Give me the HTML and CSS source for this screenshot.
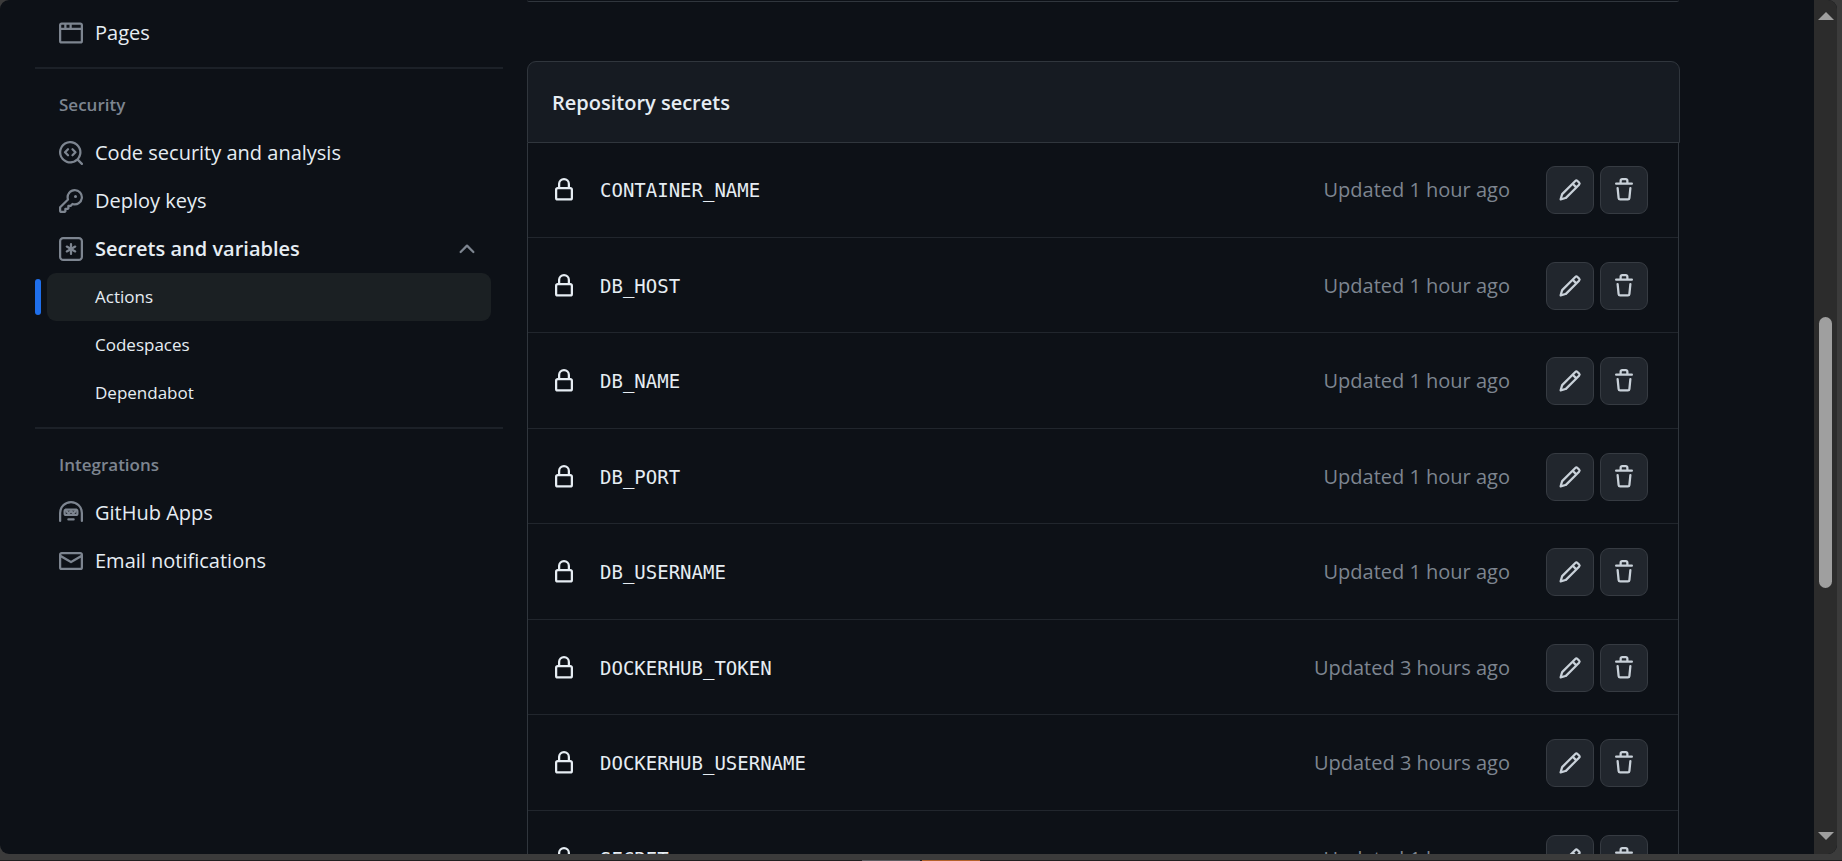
FILE: index.html
```html
<!DOCTYPE html>
<html lang="en">
<head>
<meta charset="utf-8">
<title>Actions secrets</title>
<link rel="stylesheet" href="styles.css">
</head>
<body>
<svg class="sprite" aria-hidden="true">
  <symbol id="browser" viewBox="0 0 16 16"><path d="M0 2.75C0 1.784.784 1 1.75 1h12.5c.966 0 1.75.784 1.75 1.75v10.5A1.75 1.75 0 0 1 14.25 15H1.75A1.75 1.75 0 0 1 0 13.25ZM14.5 6h-13v7.25c0 .138.112.25.25.25h12.5a.25.25 0 0 0 .25-.25Zm-6-3.5v2h6V2.75a.25.25 0 0 0-.25-.25ZM5 2.5v2h2v-2Zm-3.25 0a.25.25 0 0 0-.25.25V4.5h2v-2Z"/></symbol>
  <symbol id="codescan" viewBox="0 0 16 16"><path d="M8.47 4.97a.75.75 0 0 0 0 1.06L9.94 7.5 8.47 8.97a.75.75 0 1 0 1.06 1.06l2-2a.75.75 0 0 0 0-1.06l-2-2a.75.75 0 0 0-1.06 0ZM6.53 6.03a.75.75 0 0 0-1.06-1.06l-2 2a.75.75 0 0 0 0 1.06l2 2a.75.75 0 1 0 1.06-1.06L5.06 7.5l1.47-1.47Z"/><path d="M12.246 13.307a7.501 7.501 0 1 1 1.06-1.06l2.474 2.473a.749.749 0 0 1-.326 1.275.749.749 0 0 1-.734-.215ZM1.5 7.5a6.002 6.002 0 0 0 3.608 5.504 6.002 6.002 0 0 0 6.486-1.117.748.748 0 0 1 .292-.293A6 6 0 1 0 1.5 7.5Z"/></symbol>
  <symbol id="key" viewBox="0 0 16 16"><path d="M10.5 0a5.499 5.499 0 1 1-1.288 10.848l-.932.932a.749.749 0 0 1-.53.22H7v.75a.749.749 0 0 1-.22.53l-.5.5a.749.749 0 0 1-.53.22H5v.75a.749.749 0 0 1-.22.53l-.5.5a.749.749 0 0 1-.53.22h-2A1.75 1.75 0 0 1 0 14.25v-2c0-.199.079-.389.22-.53l4.932-4.932A5.5 5.5 0 0 1 10.5 0Zm-4 5.5c-.001.431.069.86.205 1.269a.75.75 0 0 1-.181.768L1.5 12.56v1.69c0 .138.112.25.25.25h1.69l.06-.06v-1.19a.75.75 0 0 1 .75-.75h1.19l.06-.06v-1.19a.75.75 0 0 1 .75-.75h1.19l1.023-1.025a.75.75 0 0 1 .768-.18A4 4 0 1 0 6.5 5.5ZM11 6a1 1 0 1 1 0-2 1 1 0 0 1 0 2Z"/></symbol>
  <symbol id="asterisk" viewBox="0 0 16 16"><path d="M0 2.75A2.75 2.75 0 0 1 2.75 0h10.5A2.75 2.75 0 0 1 16 2.75v10.5A2.75 2.75 0 0 1 13.25 16H2.75A2.75 2.75 0 0 1 0 13.25ZM2.75 1.5c-.69 0-1.25.56-1.25 1.25v10.5c0 .69.56 1.25 1.25 1.25h10.5c.69 0 1.25-.56 1.25-1.25V2.75c0-.69-.56-1.25-1.25-1.25Z"/><path d="M8 4a.75.75 0 0 1 .75.75V6.7l1.69-.975a.75.75 0 0 1 .75 1.3L9.5 8l1.69.976a.75.75 0 0 1-.75 1.298L8.75 9.3v1.951a.75.75 0 0 1-1.5 0V9.299l-1.69.976a.75.75 0 0 1-.75-1.3L6.5 8l-1.69-.975a.75.75 0 0 1 .75-1.3l1.69.976V4.75A.75.75 0 0 1 8 4Z"/></symbol>
  <symbol id="chevron" viewBox="0 0 16 16"><path d="M3.22 10.53a.749.749 0 0 1 0-1.06l4.25-4.25a.749.749 0 0 1 1.06 0l4.25 4.25a.749.749 0 1 1-1.06 1.06L8 6.811 4.28 10.53a.749.749 0 0 1-1.06 0Z"/></symbol>
  <symbol id="hubot" viewBox="0 0 16 16"><path d="M0 8a8 8 0 1 1 16 0v5.25a.75.75 0 0 1-1.5 0V8a6.5 6.5 0 1 0-13 0v5.25a.75.75 0 0 1-1.5 0V8Zm5.5 4.25a.75.75 0 0 1 .75-.75h3.5a.75.75 0 0 1 0 1.5h-3.5a.75.75 0 0 1-.75-.75Z"/><path fill-rule="evenodd" d="M3 6.75C3 5.784 3.784 5 4.75 5h6.5c.966 0 1.75.784 1.75 1.75v1.5A1.75 1.75 0 0 1 11.25 10h-6.5A1.75 1.75 0 0 1 3 8.25ZM4.75 6.5a.25.25 0 0 0-.25.25v1.5c0 .138.112.25.25.25h6.5a.25.25 0 0 0 .25-.25v-1.5a.25.25 0 0 0-.25-.25Z"/><path d="M4.47 6.22a.75.75 0 0 1 1.06 0l.97.97.97-.97a.75.75 0 0 1 1.06 0l.97.97.97-.97a.749.749 0 0 1 1.275.326.749.749 0 0 1-.215.734l-1.5 1.5a.75.75 0 0 1-1.06 0L8 7.81l-.97.97a.75.75 0 0 1-1.06 0l-1.5-1.5a.75.75 0 0 1 0-1.06Z"/></symbol>
  <symbol id="mail" viewBox="0 0 16 16"><path d="M1.75 2h12.5c.966 0 1.75.784 1.75 1.75v8.5A1.75 1.75 0 0 1 14.25 14H1.75A1.75 1.75 0 0 1 0 12.25v-8.5C0 2.784.784 2 1.75 2ZM1.5 12.251c0 .138.112.25.25.25h12.5a.25.25 0 0 0 .25-.25V5.809L8.38 9.397a.75.75 0 0 1-.76 0L1.5 5.809v6.442Zm13-8.181v-.32a.25.25 0 0 0-.25-.25H1.75a.25.25 0 0 0-.25.25v.32L8 7.88Z"/></symbol>
  <symbol id="lock" viewBox="0 0 16 16"><path d="M4 4a4 4 0 0 1 8 0v2h.25c.966 0 1.75.784 1.75 1.75v5.5A1.75 1.75 0 0 1 12.25 15h-8.5A1.75 1.75 0 0 1 2 13.25v-5.5C2 6.784 2.784 6 3.75 6H4Zm8.25 3.5h-8.5a.25.25 0 0 0-.25.25v5.5c0 .138.112.25.25.25h8.5a.25.25 0 0 0 .25-.25v-5.5a.25.25 0 0 0-.25-.25ZM10.5 6V4a2.5 2.5 0 1 0-5 0v2Z"/></symbol>
  <symbol id="pencil" viewBox="0 0 16 16"><path d="M11.013 1.427a1.75 1.75 0 0 1 2.474 0l1.086 1.086a1.75 1.75 0 0 1 0 2.474l-8.61 8.61c-.21.21-.47.364-.756.445l-3.251.93a.75.75 0 0 1-.927-.928l.929-3.25c.081-.286.235-.547.445-.758l8.61-8.61Zm.176 4.823L9.75 4.81l-6.286 6.287a.253.253 0 0 0-.064.108l-.558 1.953 1.953-.558a.253.253 0 0 0 .108-.064Zm1.238-3.763a.25.25 0 0 0-.354 0L10.811 3.75l1.439 1.44 1.263-1.263a.25.25 0 0 0 0-.354Z"/></symbol>
  <symbol id="trash" viewBox="0 0 16 16"><path d="M11 1.75V3h2.25a.75.75 0 0 1 0 1.5H2.75a.75.75 0 0 1 0-1.5H5V1.75C5 .784 5.784 0 6.75 0h2.5C10.216 0 11 .784 11 1.75ZM4.496 6.675l.66 6.6a.25.25 0 0 0 .249.225h5.19a.25.25 0 0 0 .249-.225l.66-6.6a.75.75 0 0 1 1.492.149l-.66 6.6A1.748 1.748 0 0 1 10.595 15h-5.19a1.75 1.75 0 0 1-1.741-1.575l-.66-6.6a.75.75 0 1 1 1.492-.15ZM6.5 1.75V3h3V1.75a.25.25 0 0 0-.25-.25h-2.5a.25.25 0 0 0-.25.25Z"/></symbol>
</svg>

<div class="window">
  <div class="content">
    <nav class="sidebar" aria-label="Repository settings">
      <ul class="nav-list">
        <li><a class="nav-item" href="#"><svg class="icon"><use href="#browser"/></svg>Pages</a></li>
      </ul>
      <h3 class="nav-title">Security</h3>
      <ul class="nav-list">
        <li><a class="nav-item" href="#"><svg class="icon"><use href="#codescan"/></svg>Code security and analysis</a></li>
        <li><a class="nav-item" href="#"><svg class="icon"><use href="#key"/></svg>Deploy keys</a></li>
        <li>
          <button class="nav-item nav-toggle" type="button" aria-expanded="true"><svg class="icon"><use href="#asterisk"/></svg><span>Secrets and variables</span><svg class="icon chevron"><use href="#chevron"/></svg></button>
          <ul class="nav-list">
            <li><a class="nav-item nav-sub current" href="#" aria-current="page">Actions</a></li>
            <li><a class="nav-item nav-sub" href="#">Codespaces</a></li>
            <li><a class="nav-item nav-sub" href="#">Dependabot</a></li>
          </ul>
        </li>
      </ul>
      <h3 class="nav-title">Integrations</h3>
      <ul class="nav-list">
        <li><a class="nav-item" href="#"><svg class="icon"><use href="#hubot"/></svg>GitHub Apps</a></li>
        <li><a class="nav-item" href="#"><svg class="icon"><use href="#mail"/></svg>Email notifications</a></li>
      </ul>
    </nav>

    <main class="main">
      <div class="previous-box"></div>
      <section class="box">
        <h2 class="box-header">Repository secrets</h2>
        <ul class="secrets">
          <li class="secret"><svg class="icon"><use href="#lock"/></svg><code class="name">CONTAINER_NAME</code><span class="updated">Updated 1 hour ago</span><span class="actions"><button class="btn" type="button" aria-label="Edit CONTAINER_NAME"><svg class="icon"><use href="#pencil"/></svg></button><button class="btn" type="button" aria-label="Remove CONTAINER_NAME"><svg class="icon"><use href="#trash"/></svg></button></span></li>
          <li class="secret"><svg class="icon"><use href="#lock"/></svg><code class="name">DB_HOST</code><span class="updated">Updated 1 hour ago</span><span class="actions"><button class="btn" type="button" aria-label="Edit DB_HOST"><svg class="icon"><use href="#pencil"/></svg></button><button class="btn" type="button" aria-label="Remove DB_HOST"><svg class="icon"><use href="#trash"/></svg></button></span></li>
          <li class="secret"><svg class="icon"><use href="#lock"/></svg><code class="name">DB_NAME</code><span class="updated">Updated 1 hour ago</span><span class="actions"><button class="btn" type="button" aria-label="Edit DB_NAME"><svg class="icon"><use href="#pencil"/></svg></button><button class="btn" type="button" aria-label="Remove DB_NAME"><svg class="icon"><use href="#trash"/></svg></button></span></li>
          <li class="secret"><svg class="icon"><use href="#lock"/></svg><code class="name">DB_PORT</code><span class="updated">Updated 1 hour ago</span><span class="actions"><button class="btn" type="button" aria-label="Edit DB_PORT"><svg class="icon"><use href="#pencil"/></svg></button><button class="btn" type="button" aria-label="Remove DB_PORT"><svg class="icon"><use href="#trash"/></svg></button></span></li>
          <li class="secret"><svg class="icon"><use href="#lock"/></svg><code class="name">DB_USERNAME</code><span class="updated">Updated 1 hour ago</span><span class="actions"><button class="btn" type="button" aria-label="Edit DB_USERNAME"><svg class="icon"><use href="#pencil"/></svg></button><button class="btn" type="button" aria-label="Remove DB_USERNAME"><svg class="icon"><use href="#trash"/></svg></button></span></li>
          <li class="secret"><svg class="icon"><use href="#lock"/></svg><code class="name">DOCKERHUB_TOKEN</code><span class="updated">Updated 3 hours ago</span><span class="actions"><button class="btn" type="button" aria-label="Edit DOCKERHUB_TOKEN"><svg class="icon"><use href="#pencil"/></svg></button><button class="btn" type="button" aria-label="Remove DOCKERHUB_TOKEN"><svg class="icon"><use href="#trash"/></svg></button></span></li>
          <li class="secret"><svg class="icon"><use href="#lock"/></svg><code class="name">DOCKERHUB_USERNAME</code><span class="updated">Updated 3 hours ago</span><span class="actions"><button class="btn" type="button" aria-label="Edit DOCKERHUB_USERNAME"><svg class="icon"><use href="#pencil"/></svg></button><button class="btn" type="button" aria-label="Remove DOCKERHUB_USERNAME"><svg class="icon"><use href="#trash"/></svg></button></span></li>
          <li class="secret"><svg class="icon"><use href="#lock"/></svg><code class="name">SECRET</code><span class="updated">Updated 1 hour ago</span><span class="actions"><button class="btn" type="button" aria-label="Edit SECRET"><svg class="icon"><use href="#pencil"/></svg></button><button class="btn" type="button" aria-label="Remove SECRET"><svg class="icon"><use href="#trash"/></svg></button></span></li>
        </ul>
      </section>
    </main>
  </div>
  <div class="scrollbar" aria-hidden="true">
    <svg class="arrow" viewBox="0 0 16 8"><path d="M8 0 16 8H0Z"/></svg>
    <div class="track"><div class="thumb"></div></div>
    <svg class="arrow" viewBox="0 0 16 8"><path d="M0 0H16L8 8Z"/></svg>
  </div>
</div>
<div class="taskbar" aria-hidden="true"><span class="task"></span><span class="task task-alert"></span></div>
</body>
</html>
```
FILE: styles.css
```css
* { box-sizing: border-box; }

body {
  margin: 0;
  height: 100vh;
  display: flex;
  flex-direction: column;
  overflow: hidden;
  background: #3b3b3b;
  color: #e6edf3;
  font-family: "Open Sans", "Noto Sans", sans-serif;
  font-size: 20px;
  line-height: 30px;
}

ul { margin: 0; padding: 0; list-style: none; }
a { color: inherit; text-decoration: none; }
button { font: inherit; color: inherit; cursor: pointer; }

.sprite { display: none; }

.icon {
  flex: none;
  width: 24px;
  height: 24px;
  fill: currentColor;
}

/* Browser window */
.window {
  flex: 1;
  min-height: 0;
  display: flex;
  margin: 0 5px 6px 0;
  border-radius: 9px;
  overflow: hidden;
  background: #0d1117;
}

.content {
  flex: 1;
  min-width: 0;
  display: flex;
  gap: 24px;
  padding: 0 134px 0 35px;
}

/* Sidebar */
.sidebar {
  flex: none;
  width: 468px;
  padding-top: 9px;
}

.nav-item {
  display: flex;
  align-items: center;
  gap: 12px;
  height: 48px;
  margin: 0 12px;
  padding: 0 12px;
  border-radius: 9px;
}

.nav-item .icon { color: #7d8590; }

.nav-toggle {
  width: 444px;
  border: 0;
  background: none;
  font-weight: 600;
  text-align: left;
}

.nav-toggle .chevron { margin-left: auto; }

.nav-sub {
  position: relative;
  padding-left: 48px;
  font-size: 17px;
}

.current { background: #1b2023; }

.current::before {
  content: "";
  position: absolute;
  left: -12px;
  top: 6px;
  width: 6px;
  height: 36px;
  border-radius: 3px;
  background: #1f6feb;
}

.nav-title {
  margin: 10px 0 0;
  padding: 21px 24px 9px;
  border-top: 2px solid #1c2128;
  color: #7d8590;
  font-size: 17px;
  font-weight: 600;
}

/* Secrets */
.main { flex: 1; min-width: 0; }

.previous-box {
  height: 2px;
  margin: 0 1px 59px 0;
  border-bottom: 1px solid #30363d;
  border-radius: 0 0 9px 9px;
}

.box-header {
  margin: 0;
  padding: 26px 24px 24px;
  border: 1px solid #30363d;
  border-radius: 9px 9px 0 0;
  background: #161b22;
  font-size: 20px;
  font-weight: 600;
}

.secrets {
  margin-right: 1px;
  border: solid #30363d;
  border-width: 0 1px;
}

.secret {
  display: flex;
  align-items: center;
  padding: 24px 30px 23px 24px;
  border-bottom: 1px solid #21262d;
}

.secret:first-child { padding-top: 23px; }
.secret:nth-child(even) { padding-bottom: 22px; }

.name {
  margin-left: 24px;
  font-family: "DejaVu Sans Mono", monospace;
  font-size: 19px;
}

.updated {
  margin-left: auto;
  color: #7d8590;
}

.actions {
  display: flex;
  gap: 6px;
  margin-left: 36px;
}

.btn {
  display: flex;
  align-items: center;
  justify-content: center;
  width: 48px;
  height: 48px;
  padding: 0;
  border: 1px solid #363b42;
  border-radius: 9px;
  background: #21262d;
  color: #c9d1d9;
}

/* Scrollbar */
.scrollbar {
  flex: none;
  display: flex;
  flex-direction: column;
  align-items: center;
  width: 23px;
  padding: 12px 0 14px;
  background: #2c2c2c;
}

.arrow { width: 16px; height: 8px; fill: #9f9f9f; }

.track {
  flex: 1;
  display: grid;
  grid-template-rows: 297fr 271fr 244fr;
}

.thumb {
  grid-row: 2;
  width: 13px;
  border-radius: 7px;
  background: #9f9f9f;
}

/* Taskbar edge */
.taskbar {
  display: flex;
  justify-content: center;
  gap: 2px;
  height: 1px;
  background: #202020;
}

.task { width: 58px; background: #5c5c60; }
.task-alert { background: #b5622a; }
```
